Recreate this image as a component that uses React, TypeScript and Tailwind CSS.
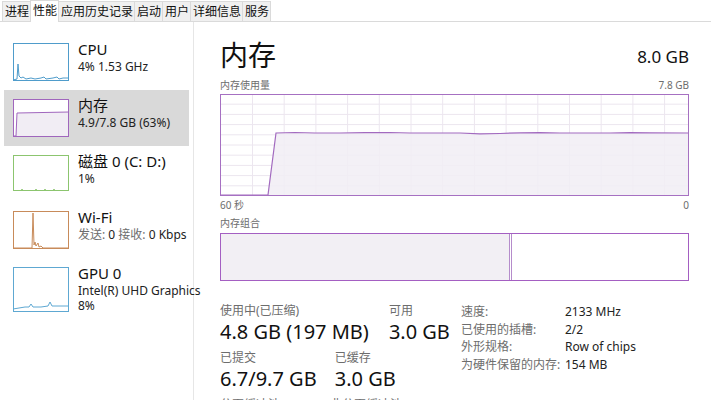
import React from "react";

const tabs = ["进程", "性能", "应用历史记录", "启动", "用户", "详细信息", "服务"];

type Item = {
  name: string;
  lines: string[];
  color: string;
  fill: string;
  path: string;
  area?: string;
  h?: number;
  selected?: boolean;
  grayFirst?: boolean;
};

const items: Item[] = [
  {
    name: "CPU",
    lines: ["4% 1.53 GHz"],
    color: "#4f9ccb",
    fill: "#eaf3f9",
    path: "M0,37 L4,36 L5,21 L6,33 L8,35 L10,34 L13,36 L18,35 L22,36 L28,35 L31,34 L33,36 L40,35 L44,34 L46,36 L50,35 L56,35",
  },
  {
    name: "内存",
    lines: ["4.9/7.8 GB (63%)"],
    color: "#a066bd",
    fill: "#f1edf4",
    path: "M0,37 L3,37 L4,14 L56,13",
    area: "M3,38 L4,14 L56,13 L56,38 Z",
    selected: true,
  },
  {
    name: "磁盘 0 (C: D:)",
    lines: ["1%"],
    color: "#8cc56f",
    fill: "#f0f7ea",
    path: "M0,36 L8,36 L9,34 L10,36 L22,36 L23,34 L24,36 L31,36 L32,34 L33,36 L40,36 L41,34 L42,36 L56,36",
    h: 36,
  },
  {
    name: "Wi-Fi",
    lines: ["发送: 0 接收: 0 Kbps"],
    color: "#c88b5a",
    fill: "#f9f0e8",
    path: "M0,37 L19,37 L20,2 L21,34 L22,31 L23,35 L25,32 L26,36 L28,35 L30,37 L56,37",
    grayFirst: true,
  },
  {
    name: "GPU 0",
    lines: ["Intel(R) UHD Graphics", "8%"],
    color: "#5ea8d2",
    fill: "#eaf3f9",
    path: "M0,42 L6,41 L12,40 L16,40 L18,37 L20,40 L28,40 L35,39 L37,35 L39,39 L46,39 L56,39",
    h: 45,
  },
];

function Thumb({ item }: { item: Item }) {
  const h = item.h ?? 38;
  return (
    <svg width={56} height={h} className="shrink-0 bg-white">
      {item.area && <path d={item.area} fill={item.fill} />}
      <path d={item.path} fill="none" stroke={item.color} strokeWidth={1} />
      <rect x={0.5} y={0.5} width={55} height={h - 1} fill="none" stroke={item.color} strokeWidth={1} />
    </svg>
  );
}

function UsageChart() {
  const w = 469;
  const h = 102;
  const vx = Array.from({ length: 14 }, (_, k) => 32.5 + k * 31.7);
  const hy = Array.from({ length: 9 }, (_, k) => 10.2 * (k + 1));
  const line =
    "M1,101 L48,101 L56,39 L75,38.5 L95,39 L120,39 L145,38.6 L170,38.5 L190,39 L215,39 L240,39 L260,39.8 L280,39.5 L300,38.8 L320,38.6 L340,39 L365,39 L390,39 L410,38.6 L430,38.8 L468,39";
  return (
    <svg width={w} height={h} className="block">
      {hy.map((y) => (
        <line key={y} x1={0} x2={w} y1={y} y2={y} stroke="#ece6ef" strokeWidth={1} />
      ))}
      {vx.map((x) => (
        <line key={x} x1={x} x2={x} y1={0} y2={h} stroke="#ece6ef" strokeWidth={1} />
      ))}
      <path d={line + " L468,101 Z"} fill="#f1edf4" fillOpacity={0.85} stroke="none" />
      <path d={line} fill="none" stroke="#a26abf" strokeWidth={1.2} />
      <rect x={0.5} y={0.5} width={w - 1} height={h - 1} fill="none" stroke="#a670c2" strokeWidth={1} />
    </svg>
  );
}

function Stat({ label, value, className }: { label: string; value: string; className?: string }) {
  return (
    <div className={className}>
      <div className="text-[12px] leading-[16px] text-[#6d6d6d]">{label}</div>
      <div className="text-[20px] leading-[26px] text-[#111]">{value}</div>
    </div>
  );
}

const specs = [
  ["速度:", "2133 MHz"],
  ["已使用的插槽:", "2/2"],
  ["外形规格:", "Row of chips"],
  ["为硬件保留的内存:", "154 MB"],
];

export default function App() {
  return (
    <div className="w-[711px] h-[400px] overflow-hidden bg-white text-[#111] font-['Segoe_UI','Noto_Sans','Noto_Sans_CJK_SC',sans-serif]">
      {/* tab strip */}
      <div className="flex items-end h-[22px] pl-[3px] border-b border-[#dadada]">
        {tabs.map((t) => (
          <div
            key={t}
            className={
              t === "性能"
                ? "h-[22px] -mb-px pl-[2px] pr-[1px] bg-white border border-b-0 border-[#dadada] text-[12px] leading-[20px] -ml-px"
                : "h-[20px] pl-[2px] pr-[1px] bg-[#f0f0f0] border border-b-0 border-[#dadada] text-[12px] leading-[19px] -ml-px"
            }
          >
            {t}
          </div>
        ))}
      </div>

      <div className="flex h-[378px]">
        {/* sidebar */}
        <div className="w-[194px] shrink-0 border-r border-[#e6e6e6] pt-[12px]">
          {items.map((it) => (
            <div
              key={it.name}
              className={
                (it.selected ? "bg-[#d9d9d9] " : "") +
                "mx-[4px] h-[56px] flex items-start gap-[9px] pl-[9px] pt-[9px]"
              }
            >
              <Thumb item={it} />
              <div className="-mt-[4px] whitespace-nowrap">
                <div className="text-[15px] leading-[20px]">{it.name}</div>
                {it.lines.map((l) => (
                  <div
                    key={l}
                    className={
                      "text-[12px] leading-[15px] " + (it.grayFirst ? "text-[#6d6d6d]" : "text-[#222]")
                    }
                  >
                    {it.grayFirst ? (
                      <>
                        发送: <span className="text-[#222]">0</span> 接收: <span className="text-[#222]">0 Kbps</span>
                      </>
                    ) : (
                      l
                    )}
                  </div>
                ))}
              </div>
            </div>
          ))}
        </div>

        {/* detail pane */}
        <div className="flex-1 pl-[26px] pr-[22px] pt-[14px]">
          <div className="flex items-end justify-between h-[36px]">
            <div className="text-[28px] leading-[34px]">内存</div>
            <div className="text-[17px] leading-[22px] mb-[4px]">8.0 GB</div>
          </div>
          <div className="flex justify-between text-[10px] leading-[14px] text-[#6d6d6d] mt-[6px] mb-[2px]">
            <span>内存使用量</span>
            <span>7.8 GB</span>
          </div>
          <UsageChart />
          <div className="flex justify-between text-[10px] leading-[14px] text-[#6d6d6d] mt-[2px]">
            <span>60 秒</span>
            <span>0</span>
          </div>
          <div className="text-[10px] leading-[14px] text-[#6d6d6d] mt-[4px]">内存组合</div>
          <div className="mt-[3px] h-[48px] border border-[#a45fc2] flex">
            <div className="w-[289px] bg-[#f2eff4] border-r border-[#b58ccb]" />
            <div className="w-[2px] bg-white border-r border-[#b58ccb]" />
            <div className="flex-1 bg-white" />
          </div>

          <div className="flex mt-[22px]">
            <div className="w-[241px] shrink-0">
              <div className="flex gap-[20px]">
                <Stat label="使用中(已压缩)" value="4.8 GB (197 MB)" />
                <Stat label="可用" value="3.0 GB" />
              </div>
              <div className="flex gap-[18px] mt-[5px]">
                <Stat label="已提交" value="6.7/9.7 GB" />
                <Stat label="已缓存" value="3.0 GB" />
              </div>
              <div className="flex gap-[50px] mt-[5px] text-[12px] leading-[16px] text-[#6d6d6d]">
                <span>分页缓冲池</span>
                <span>非分页缓冲池</span>
              </div>
            </div>
            <div className="text-[12px] leading-[17.5px]">
              {specs.map(([k, v]) => (
                <div key={k} className="flex">
                  <span className="w-[104px] text-[#6d6d6d]">{k}</span>
                  <span className="text-[#222]">{v}</span>
                </div>
              ))}
            </div>
          </div>
        </div>
      </div>
    </div>
  );
}
